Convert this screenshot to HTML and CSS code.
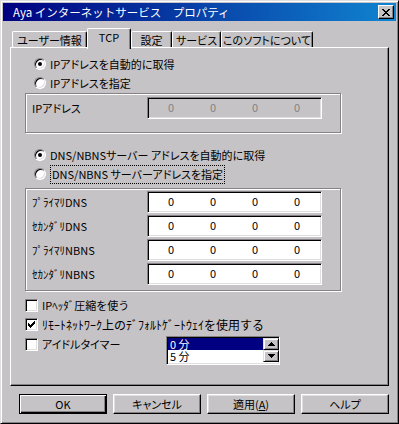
FILE: index.html
```html
<!DOCTYPE html>
<html lang="ja">
<head>
<meta charset="UTF-8">
<meta name="viewport" content="width=device-width, initial-scale=1.0">
<title>Aya インターネットサービス プロパティ</title>
<link rel="stylesheet" href="styles.css">
</head>
<body>
<div class="window">
    <div class="titlebar">
        <span class="title">Aya インターネットサービス　プロパティ</span>
        <span class="close">
            <svg width="8" height="7" viewBox="0 0 8 7" shape-rendering="crispEdges"><path d="M0 0h2v1H0zM6 0h2v1H6zM1 1h2v1H1zM5 1h2v1H5zM2 2h4v1H2zM3 3h2v1H3zM2 4h4v1H2zM1 5h2v1H1zM5 5h2v1H5zM0 6h2v1H0zM6 6h2v1H6z"/></svg>
        </span>
    </div>

    <div class="tabs">
        <div class="tab t-user">ユーザー情報</div>
        <div class="tab t-tcp active">TCP</div>
        <div class="tab t-conf">設定</div>
        <div class="tab t-svc">サービス</div>
        <div class="tab t-about">このソフトについて</div>
    </div>

    <div class="panel">
        <div class="option"><span class="radio on"></span><span>IPアドレスを自動的に取得</span></div>
        <div class="option"><span class="radio"></span><span>IPアドレスを指定</span></div>

        <div class="group ip-group">
            <div class="row">
                <span class="label">IPアドレス</span>
                <div class="field disabled"><span>0</span><span>0</span><span>0</span><span>0</span></div>
            </div>
        </div>

        <div class="option opt-dns"><span class="radio on"></span><span>DNS/NBNSサーバー アドレスを自動的に取得</span></div>
        <div class="option"><span class="radio"></span><span class="focus">DNS/NBNS サーバーアドレスを指定</span></div>

        <div class="group dns-group">
            <div class="row">
                <span class="label hw">ﾌﾟﾗｲﾏﾘDNS</span>
                <div class="field"><span>0</span><span>0</span><span>0</span><span>0</span></div>
            </div>
            <div class="row">
                <span class="label hw">ｾｶﾝﾀﾞﾘDNS</span>
                <div class="field"><span>0</span><span>0</span><span>0</span><span>0</span></div>
            </div>
            <div class="row">
                <span class="label hw">ﾌﾟﾗｲﾏﾘNBNS</span>
                <div class="field"><span>0</span><span>0</span><span>0</span><span>0</span></div>
            </div>
            <div class="row">
                <span class="label hw">ｾｶﾝﾀﾞﾘNBNS</span>
                <div class="field"><span>0</span><span>0</span><span>0</span><span>0</span></div>
            </div>
        </div>

        <div class="check check-first"><span class="box"></span><span class="hw">IPﾍｯﾀﾞ圧縮を使う</span></div>
        <div class="check">
            <span class="box">
                <svg width="7" height="7" viewBox="0 0 7 7" shape-rendering="crispEdges"><path d="M6 0h1v1H6zM5 1h2v1H5zM0 2h1v1H0zM4 2h3v1H4zM0 3h2v1H0zM3 3h3v1H3zM0 4h5v1H0zM1 5h3v1H1zM2 6h1v1H2z"/></svg>
            </span>
            <span class="hw wide">ﾘﾓｰﾄﾈｯﾄﾜｰｸ上のﾃﾞﾌｫﾙﾄｹﾞｰﾄｳｪｲを使用する</span>
        </div>
        <div class="idle-row">
            <div class="check idle"><span class="box"></span><span>アイドルタイマー</span></div>
            <div class="listbox">
                <div class="items">
                    <div class="item selected">0 分</div>
                    <div class="item">5 分</div>
                </div>
                <div class="scroll">
                    <span class="sbtn"><svg width="7" height="4" viewBox="0 0 7 4" shape-rendering="crispEdges"><path d="M3 0h1v1H3zM2 1h3v1H2zM1 2h5v1H1zM0 3h7v1H0z"/></svg></span>
                    <span class="sbtn"><svg width="7" height="4" viewBox="0 0 7 4" shape-rendering="crispEdges"><path d="M0 0h7v1H0zM1 1h5v1H1zM2 2h3v1H2zM3 3h1v1H3z"/></svg></span>
                </div>
            </div>
        </div>
    </div>

    <div class="buttons">
        <div class="btn default">OK</div>
        <div class="btn">キャンセル</div>
        <div class="btn">適用(<u>A</u>)</div>
        <div class="btn">ヘルプ</div>
    </div>
</div>
</body>
</html>
```

FILE: styles.css
```css
body {
    margin: 0;
    background: #c6c3c6;
    font-family: "Noto Sans CJK JP", "Noto Sans", sans-serif;
    font-size: 11px;
    font-feature-settings: "palt";
    color: #000;
}

/* half-width kana look too thin with palt */
.hw {
    font-feature-settings: normal;
}

.wide {
    font-size: 12px;
}

.window {
    box-sizing: border-box;
    width: 399px;
    height: 424px;
    padding: 2px;
    border: 1px solid;
    border-color: #dfdfdf #000 #000 #dfdfdf;
    box-shadow: inset 1px 1px #fff, inset -1px -1px #848284;
    display: flex;
    flex-direction: column;
}

/* title bar */
.titlebar {
    height: 18px;
    display: flex;
    align-items: center;
    padding: 0 2px 0 10px;
    background: linear-gradient(to right, #000080, #1084d0);
    color: #fff;
}

.title {
    font-size: 11.5px;
    font-feature-settings: normal;
    line-height: 18px;
}

.close {
    box-sizing: border-box;
    width: 16px;
    height: 14px;
    margin-left: auto;
    display: flex;
    align-items: center;
    justify-content: center;
    background: #c6c3c6;
    border: 1px solid;
    border-color: #fff #000 #000 #fff;
    box-shadow: inset -1px -1px #848284;
}

/* tabs */
.tabs {
    height: 21px;
    margin: 7px 7px -2px;
    padding-left: 2px;
    display: flex;
    align-items: flex-end;
    position: relative;
    z-index: 1;
}

.tab {
    box-sizing: border-box;
    height: 16px;
    margin-bottom: 2px;
    display: flex;
    align-items: center;
    justify-content: center;
    border-top: 1px solid #fff;
    border-left: 1px solid #fff;
    border-right: 1px solid #000;
    border-radius: 2px 2px 0 0;
    box-shadow: inset -1px 0 #848284;
    background: #c6c3c6;
}

.tab.active {
    height: 21px;
    margin-bottom: 0;
    padding-bottom: 4px;
}

.t-user { width: 75px; }
.t-tcp { width: 44px; }
.t-conf { width: 41px; }
.t-svc { width: 49px; }
.t-about { width: 92px; }

/* tab page */
.panel {
    box-sizing: border-box;
    height: 339px;
    margin: 0 7px;
    padding: 7px 0 0 14px;
    border: 1px solid;
    border-color: #fff #000 #000 #fff;
    box-shadow: inset -1px -1px #848284;
    display: flex;
    flex-direction: column;
    align-items: flex-start;
}

.option {
    height: 18px;
    margin-bottom: 1px;
    padding-left: 9px;
    display: flex;
    align-items: center;
    gap: 4px;
}

.opt-dns {
    margin-top: 13px;
}

.radio {
    box-sizing: border-box;
    width: 12px;
    height: 12px;
    border-radius: 50%;
    border: 1px solid;
    border-color: #848284 #fff #fff #848284;
    box-shadow: inset 1px 1px #000, inset -1px -1px #dfdfdf;
    background: #fff;
    display: flex;
    align-items: center;
    justify-content: center;
}

.radio.on::after {
    content: "";
    width: 4px;
    height: 4px;
    border-radius: 50%;
    background: #000;
}

.focus {
    line-height: 17px;
    padding: 0 1px;
    border: 1px dotted #000;
}

/* group boxes */
.group {
    box-sizing: border-box;
    width: 316px;
    border: 1px solid #848284;
    box-shadow: inset 1px 1px #fff, 1px 1px #fff;
    padding: 3px 0 0 6px;
    display: flex;
    flex-direction: column;
    gap: 2px;
}

.ip-group {
    height: 40px;
}

.dns-group {
    height: 103px;
    margin-top: 4px;
    padding-top: 2px;
}

.row {
    display: flex;
    align-items: center;
}

.label {
    width: 115px;
    line-height: 22px;
}

.field {
    box-sizing: border-box;
    width: 175px;
    height: 22px;
    padding-left: 2px;
    display: flex;
    border: 1px solid;
    border-color: #848284 #fff #fff #848284;
    box-shadow: inset 1px 1px #000, inset -1px -1px #dfdfdf;
    background: #fff;
}

.field span {
    width: 42px;
    text-align: center;
    line-height: 19px;
}

.field.disabled {
    background: #c6c3c6;
    color: #848284;
}

/* check boxes */
.check {
    height: 18px;
    margin-bottom: 1px;
    display: flex;
    align-items: center;
    gap: 4px;
}

.check-first {
    margin-top: 5px;
}

.box {
    box-sizing: border-box;
    width: 13px;
    height: 13px;
    border: 1px solid;
    border-color: #848284 #fff #fff #848284;
    box-shadow: inset 1px 1px #000, inset -1px -1px #dfdfdf;
    background: #fff;
    display: flex;
    align-items: center;
    justify-content: center;
}

.idle-row {
    display: flex;
    align-items: flex-start;
}

.check.idle {
    width: 141px;
    height: 20px;
}

.listbox {
    box-sizing: border-box;
    width: 114px;
    height: 29px;
    margin-top: 2px;
    padding: 1px 0 0 1px;
    display: flex;
    border: 1px solid;
    border-color: #848284 #fff #fff #848284;
    box-shadow: inset 1px 1px #000, inset -1px -1px #dfdfdf;
    background: #fff;
}

.items {
    flex: 1;
    font-size: 11px;
}

.item {
    height: 12px;
    line-height: 12px;
    padding-left: 2px;
}

.item.selected {
    background: #000080;
    color: #fff;
}

.scroll {
    width: 16px;
    display: flex;
    flex-direction: column;
}

.sbtn {
    box-sizing: border-box;
    height: 12px;
    display: flex;
    align-items: center;
    justify-content: center;
    background: #c6c3c6;
    border: 1px solid;
    border-color: #dfdfdf #000 #000 #dfdfdf;
    box-shadow: inset 1px 1px #fff, inset -1px -1px #848284;
}

/* dialog buttons */
.buttons {
    margin-top: 8px;
    padding-right: 7px;
    display: flex;
    justify-content: flex-end;
    gap: 6px;
}

.btn {
    box-sizing: border-box;
    width: 88px;
    height: 20px;
    display: flex;
    align-items: center;
    justify-content: center;
    border: 1px solid;
    border-color: #fff #000 #000 #fff;
    box-shadow: inset -1px -1px #848284, inset 1px 1px #dfdfdf;
}

.btn.default {
    border-color: #000;
    box-shadow: inset 1px 1px #fff, inset -1px -1px #000, inset -2px -2px #848284;
}
```
